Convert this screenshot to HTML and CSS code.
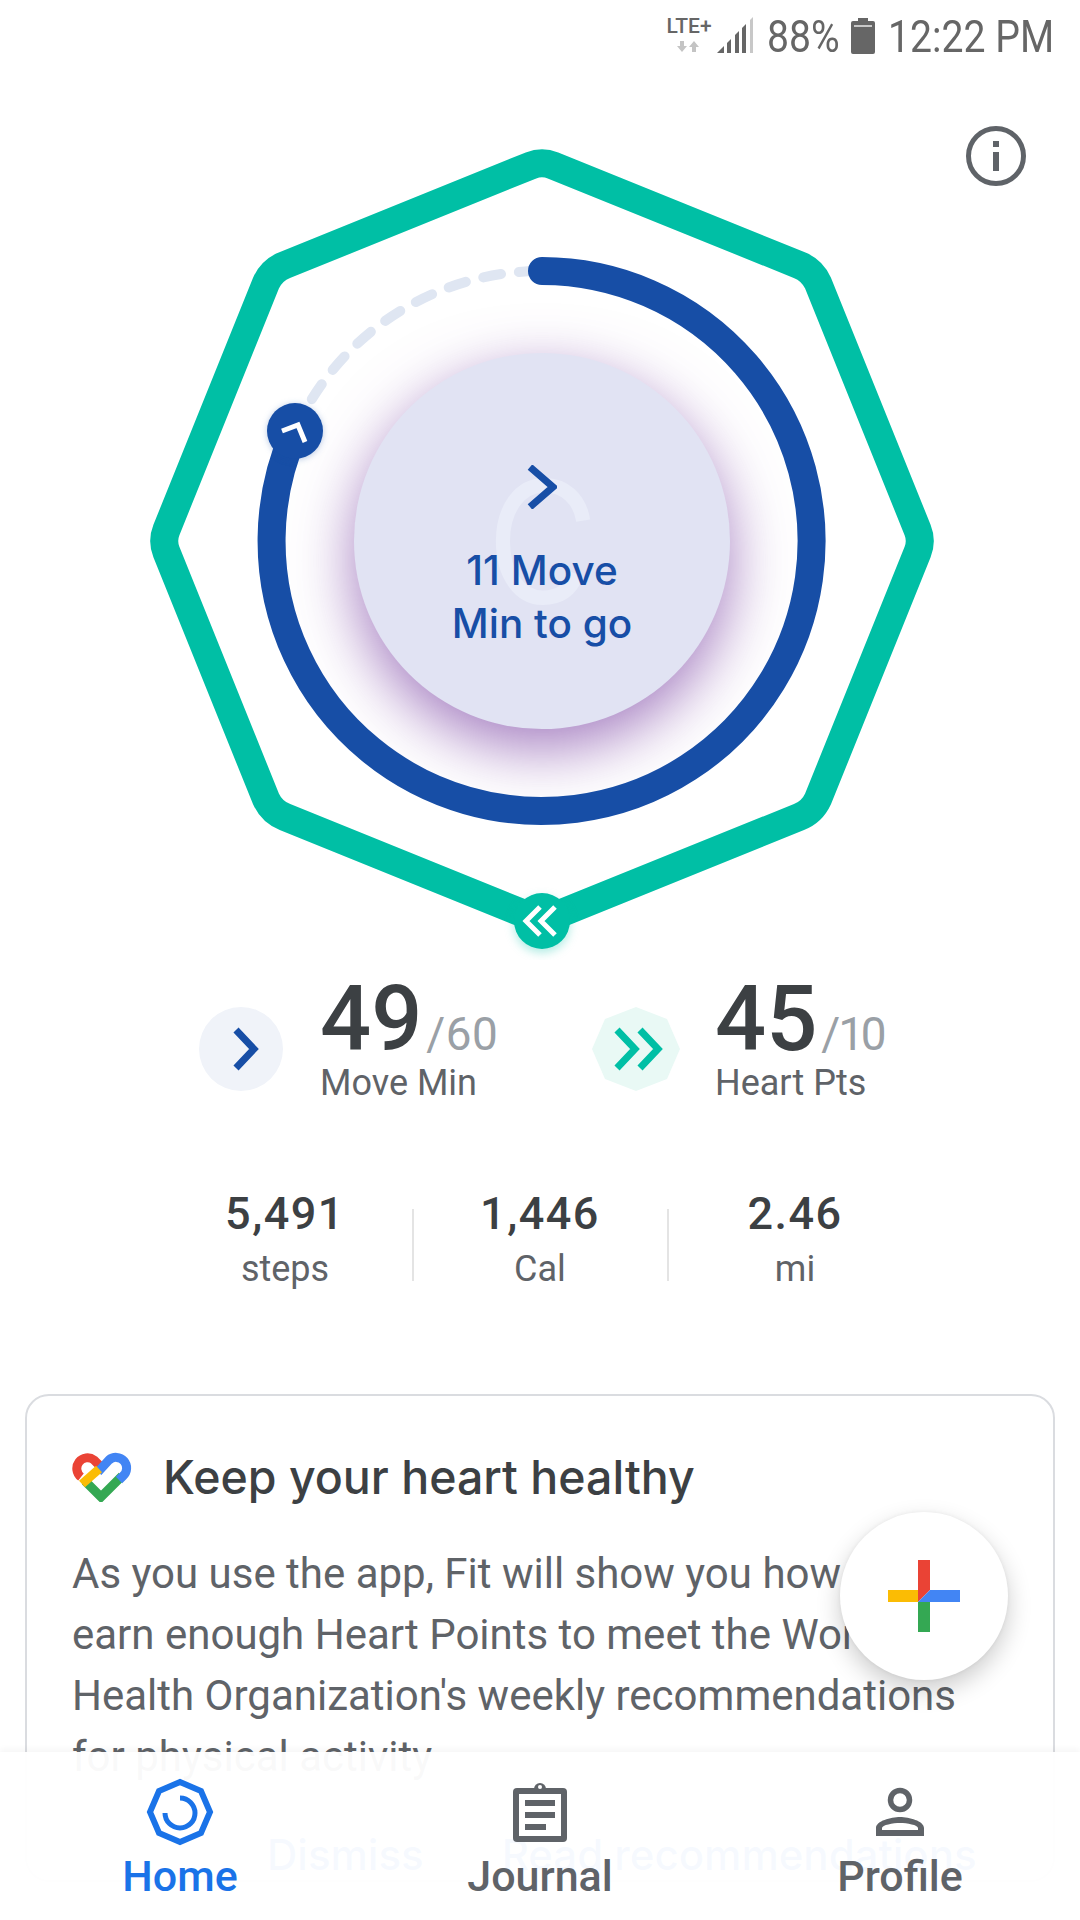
FILE: index.html
```html
<!DOCTYPE html>
<html lang="en">

<head>
  <meta charset="UTF-8">
  <meta name="viewport" content="width=device-width, initial-scale=1.0">
  <title>Fit</title>
  <link rel="stylesheet" href="styles.css">
</head>

<body>
  <header class="status">
    <div class="status-net">
      <span class="status-lte">LTE+</span>
      <svg width="24" height="12" viewBox="0 0 24 12">
        <path d="M5 11 0 5h3V0h4v5h3zM17 0l5 6h-3v5h-4V6h-3z" fill="#c4c4c4" />
      </svg>
    </div>
    <svg class="status-signal" width="37" height="36" viewBox="0 0 37 36">
      <path d="M0 36 7 29v7z" fill="#666" />
      <path d="M10 26 14 22v14h-4zM18 18 22 14v22h-4zM25 11 29 7v29h-4z" fill="#666" />
      <path d="M33 3 36 0v36h-3z" fill="#c8c8c8" />
    </svg>
    <span class="status-text status-pct">88%</span>
    <svg class="status-battery" width="24" height="36" viewBox="0 0 24 36">
      <path d="M7 0h10v3h5a2 2 0 0 1 2 2v29a2 2 0 0 1-2 2H2a2 2 0 0 1-2-2V5a2 2 0 0 1 2-2h5z" fill="#666" />
      <rect x="3" y="7" width="18" height="2" fill="#c8c8c8" />
    </svg>
    <span class="status-text status-time">12:22 PM</span>
  </header>

  <section class="dial">
    <svg class="dial-art" width="1080" height="896" viewBox="0 64 1080 896">
      <path d="M553 165.4 799 265Q812 270 818 283L917.6 530Q922 541 917.6 552L818 799Q812 812 799 817L553 916.6Q542 921 531 916.6L285 817Q272 812 266 799L166.4 552Q162 541 166.4 530L266 283Q272 270 285 265L531 165.4Q542 161 553 165.4Z"
        fill="none" stroke="#00bfa5" stroke-width="28" />
      <path d="M295 431A270 270 0 0 1 542 271" fill="none" stroke="#dfe6f2" stroke-width="10" stroke-linecap="round"
        stroke-dasharray="18 18" />
    </svg>
    <div class="dial-core">
      <svg class="dial-ghost" width="97" height="127" viewBox="0 0 110 140" preserveAspectRatio="none">
        <path d="M100 47C96 22 78 8 56 8 28 8 9 34 9 70s19 62 45 62c18 0 32-8 39-26" fill="none" stroke="#e9ecf8"
          stroke-width="16" />
      </svg>
      <svg class="dial-chevron" width="30" height="44" viewBox="0 0 30 44">
        <path d="M3 2 26 22 3 42" fill="none" stroke="#174ea6" stroke-width="7" />
      </svg>
      <p class="dial-text">11 Move<br>Min to go</p>
    </div>
    <svg class="dial-art dial-top" width="1080" height="896" viewBox="0 64 1080 896">
      <path d="M542 271A270 270 0 1 1 295 431" fill="none" stroke="#174ea6" stroke-width="28"
        stroke-linecap="round" />
      <circle class="dial-knob" cx="295" cy="431" r="28" fill="#174ea6" />
      <path d="M282 431 298 425 305 442" fill="none" stroke="#fff" stroke-width="5" />
      <circle class="dial-badge" cx="542" cy="921" r="28" fill="#00bfa5" />
      <path d="M540 907 526 921 540 935M555 907 541 921 555 935" fill="none" stroke="#fff" stroke-width="5" />
    </svg>
    <svg class="info" width="60" height="60" viewBox="0 0 60 60">
      <circle cx="30" cy="30" r="27.5" fill="none" stroke="#5f6368" stroke-width="5" />
      <rect x="27" y="15" width="6" height="6" fill="#5f6368" />
      <rect x="27" y="26" width="6" height="19" fill="#5f6368" />
    </svg>
  </section>

  <section class="goals">
    <div class="goal">
      <svg class="goal-icon" width="84" height="84" viewBox="0 0 84 84">
        <circle cx="42" cy="42" r="42" fill="#f0f3f9" />
        <path d="M37 23 55 42 37 61" fill="none" stroke="#174ea6" stroke-width="7" />
      </svg>
      <div>
        <div class="goal-value">49<span class="goal-total">/60</span></div>
        <div class="goal-label">Move Min</div>
      </div>
    </div>
    <div class="goal goal-heart">
      <svg class="goal-icon" width="88" height="84" viewBox="0 0 88 84">
        <polygon points="44,0 75,12 88,42 75,72 44,84 13,72 0,42 13,12" fill="#e9f9f5" />
        <path d="M25 23 43 42 25 61M48 23 66 42 48 61" fill="none" stroke="#00bfa5" stroke-width="7" />
      </svg>
      <div>
        <div class="goal-value">45<span class="goal-total">/10</span></div>
        <div class="goal-label">Heart Pts</div>
      </div>
    </div>
  </section>

  <section class="stats">
    <div class="stat">
      <div class="stat-value">5,491</div>
      <div class="stat-label">steps</div>
    </div>
    <span class="stat-sep"></span>
    <div class="stat">
      <div class="stat-value">1,446</div>
      <div class="stat-label">Cal</div>
    </div>
    <span class="stat-sep"></span>
    <div class="stat">
      <div class="stat-value">2.46</div>
      <div class="stat-label">mi</div>
    </div>
  </section>

  <article class="card">
    <div class="card-head">
      <svg width="60" height="50" viewBox="0 0 60 50">
        <path d="M50 24 29 45 13 29" fill="none" stroke="#34a853" stroke-width="9" />
        <path d="M9 25A10.5 10.5 0 0 1 22 8L29 15" fill="none" stroke="#ea4335" stroke-width="9" />
        <path d="M26 20 37 8A10.5 10.5 0 0 1 51 24L47 28" fill="none" stroke="#4285f4" stroke-width="9" />
        <path d="M10 32 27 17" fill="none" stroke="#fbbc04" stroke-width="9" />
      </svg>
      <h2 class="card-title">Keep your heart healthy</h2>
    </div>
    <p class="card-text">As you use the app, Fit will show you how to<br>earn enough Heart Points to meet the World<br>
      Health Organization's weekly recommendations<br>for physical activity</p>
    <div class="card-actions">
      <span>Dismiss</span>
      <span>Read recommendations</span>
    </div>
  </article>

  <button class="fab">
    <svg width="72" height="72" viewBox="0 0 72 72">
      <polygon points="30,0 42,0 42,30 30,42" fill="#ea4335" />
      <polygon points="0,30 30,30 30,42 0,42" fill="#fbbc04" />
      <polygon points="30,42 42,42 42,72 30,72" fill="#34a853" />
      <polygon points="42,30 72,30 72,42 30,42" fill="#4285f4" />
    </svg>
  </button>

  <nav class="nav">
    <div class="nav-item nav-active">
      <svg width="72" height="72" viewBox="0 0 72 72">
        <polygon points="36,6 57,15 66,36 57,57 36,66 15,57 6,36 15,15" fill="none" stroke="#1a73e8"
          stroke-width="6" />
        <path d="M36 22A15 15 0 1 1 21 37" fill="none" stroke="#1a73e8" stroke-width="5" />
      </svg>
      <span>Home</span>
    </div>
    <div class="nav-item">
      <svg width="72" height="72" viewBox="0 0 72 72">
        <circle cx="36" cy="13" r="6" fill="#5f6368" />
        <rect x="9" y="12" width="54" height="54" rx="4" fill="#5f6368" />
        <circle cx="36" cy="11" r="2" fill="#fff" />
        <rect x="15" y="18" width="42" height="42" fill="#fff" />
        <path d="M21 24h30v6H21zM21 36h30v6H21zM21 48h21v6H21z" fill="#5f6368" />
      </svg>
      <span>Journal</span>
    </div>
    <div class="nav-item">
      <svg width="72" height="72" viewBox="0 0 72 72">
        <circle cx="36" cy="24" r="9.5" fill="none" stroke="#5f6368" stroke-width="5.5" />
        <path d="M12 60V52C12 45 27 41 36 41S60 45 60 52V60ZM18 54H54V52C54 49 43 47 36 47S18 49 18 52Z"
          fill="#5f6368" fill-rule="evenodd" />
      </svg>
      <span>Profile</span>
    </div>
  </nav>
</body>

</html>
```

FILE: styles.css
```css
html {
  box-sizing: border-box;
  font-family: Roboto, sans-serif;
  background-color: #fff;
}

*,
*::before,
*::after {
  box-sizing: inherit;
}

body {
  position: relative;
  margin: 0;
  width: 1080px;
  height: 1920px;
  overflow: hidden;
  color: #5f6368;
}

/* status bar */
.status {
  display: flex;
  justify-content: flex-end;
  height: 64px;
  padding: 12px 24px 0 0;
}

.status-net {
  display: flex;
  flex-direction: column;
  align-items: center;
  width: 46px;
  margin-right: 5px;
  padding-top: 4px;
}

.status-lte {
  font-size: 21px;
  line-height: 20px;
  font-weight: 500;
  color: #666;
}

.status-net svg {
  margin-top: 5px;
}

.status-signal {
  margin: 5px 13px 0 0;
}

.status-text {
  font-size: 45px;
  line-height: 50px;
  color: #666;
  white-space: nowrap;
  transform: scaleX(0.87);
  transform-origin: left;
}

.status-pct {
  width: 69px;
  margin-right: 15px;
}

.status-battery {
  margin: 6px 13px 0 0;
}

.status-time {
  width: 168px;
}

/* dial */
.dial {
  position: relative;
  height: 896px;
}

.dial-art {
  position: absolute;
  left: 0;
  top: 0;
}

.dial-top {
  pointer-events: none;
}

.dial-knob {
  filter: drop-shadow(0 1px 3px rgba(23, 78, 166, 0.3));
}

.dial-badge {
  filter: drop-shadow(0 4px 5px rgba(0, 191, 165, 0.3));
}

.dial-core {
  position: absolute;
  left: 354px;
  top: 289px;
  width: 376px;
  height: 376px;
  border-radius: 50%;
  background-color: #e1e3f3;
  box-shadow: 0 20px 60px rgba(125, 70, 165, 0.7);
  text-align: center;
}

.dial-ghost {
  position: absolute;
  left: 141px;
  top: 125px;
}

.dial-chevron {
  position: absolute;
  left: 173px;
  top: 112px;
}

.dial-text {
  position: absolute;
  left: 0;
  right: 0;
  top: 191px;
  margin: 0;
  font-family: Inter, Roboto, sans-serif;
  font-size: 40.5px;
  line-height: 53px;
  font-weight: 500;
  color: #174ea6;
}

.info {
  position: absolute;
  left: 966px;
  top: 62px;
}

/* goals */
.goals {
  display: grid;
  grid-template-columns: 393px auto;
  padding: 16px 0 0 199px;
}

.goal {
  display: flex;
  gap: 37px;
}

.goal-heart {
  gap: 35px;
}

.goal-icon {
  margin-top: 31px;
}

.goal-value {
  height: 87px;
  font-size: 90px;
  line-height: 87px;
  font-weight: 500;
  color: #3c4043;
}

.goal-total {
  margin-left: 4px;
  font-size: 46px;
  line-height: 46px;
  font-weight: 400;
  font-variant-numeric: proportional-nums;
  color: #9aa0a6;
}

.goal-label {
  font-size: 36px;
  line-height: 40px;
}

/* stats */
.stats {
  display: flex;
  justify-content: center;
  margin-top: 86px;
}

.stat {
  width: 253px;
  text-align: center;
}

.stat-value {
  font-size: 45px;
  line-height: 50px;
  font-weight: 500;
  letter-spacing: 1.5px;
  color: #3c4043;
}

.stat-label {
  margin-top: 10px;
  font-size: 36px;
  line-height: 40px;
}

.stat-sep {
  width: 2px;
  height: 72px;
  margin-top: 20px;
  background-color: #e4e4e4;
}

/* card */
.card {
  margin: 105px 25px 0;
  padding: 54px 45px 0;
  border: 2px solid #dadce0;
  border-radius: 24px;
}

.card-head {
  display: flex;
  align-items: center;
  gap: 31px;
}

.card-title {
  margin: 0;
  font-family: Inter, Roboto, sans-serif;
  font-size: 46.5px;
  line-height: 54px;
  font-weight: 500;
  color: #3c4043;
}

.card-text {
  margin: 39px 0 0;
  font-size: 42px;
  line-height: 61px;
  white-space: nowrap;
}

.card-actions {
  display: flex;
  gap: 78px;
  margin: 43px 0 0 195px;
  font-family: Inter, Roboto, sans-serif;
  font-size: 42px;
  line-height: 50px;
  font-weight: 500;
  color: #1a73e8;
  white-space: nowrap;
}

/* floating button */
.fab {
  position: absolute;
  left: 840px;
  top: 1512px;
  display: flex;
  align-items: center;
  justify-content: center;
  width: 168px;
  height: 168px;
  padding: 0;
  border: 0;
  border-radius: 50%;
  background-color: #fff;
  box-shadow: 0 10px 24px rgba(0, 0, 0, 0.2), 0 0 4px rgba(0, 0, 0, 0.06);
}

/* bottom nav */
.nav {
  position: absolute;
  left: 0;
  right: 0;
  top: 1752px;
  height: 168px;
  display: grid;
  grid-template-columns: repeat(3, 360px);
  padding-top: 24px;
  background-color: rgba(255, 255, 255, 0.96);
  box-shadow: 0 -3px 6px rgba(0, 0, 0, 0.04);
}

.nav-item {
  display: flex;
  flex-direction: column;
  align-items: center;
  font-size: 43px;
  line-height: 50px;
  font-weight: 500;
}

.nav-item svg {
  margin-bottom: 3px;
}

.nav-active {
  color: #1a73e8;
}
```
